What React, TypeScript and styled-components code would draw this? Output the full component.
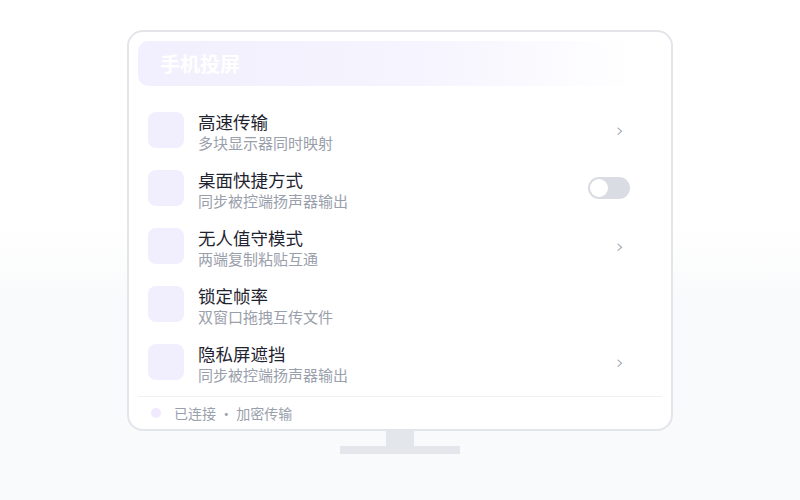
import React from "react";
import styled, { createGlobalStyle } from "styled-components";

const GlobalStyle = createGlobalStyle`
  html, body {
    margin: 0;
    padding: 0;
  }
  body {
    font-family: "Noto Sans CJK SC", "Noto Sans", sans-serif;
    background: linear-gradient(180deg, #ffffff 0%, #ffffff 45%, #f9fafb 60%, #f9fafb 100%);
  }
`;

type Item = {
  title: string;
  desc: string;
  action: "chevron" | "toggle" | "none";
};

const items: Item[] = [
  { title: "高速传输", desc: "多块显示器同时映射", action: "chevron" },
  { title: "桌面快捷方式", desc: "同步被控端扬声器输出", action: "toggle" },
  { title: "无人值守模式", desc: "两端复制粘贴互通", action: "chevron" },
  { title: "锁定帧率", desc: "双窗口拖拽互传文件", action: "none" },
  { title: "隐私屏遮挡", desc: "同步被控端扬声器输出", action: "chevron" },
];

const App = () => {
  return (
    <Page>
      <GlobalStyle />
      <Monitor>
        <Header>手机投屏</Header>
        <List>
          {items.map((item, idx) => (
            <Row key={idx}>
              <IconBox />
              <Texts>
                <Title>{item.title}</Title>
                <Desc>{item.desc}</Desc>
              </Texts>
              {item.action === "chevron" && <Chevron>›</Chevron>}
              {item.action === "toggle" && (
                <Toggle>
                  <Knob />
                </Toggle>
              )}
            </Row>
          ))}
        </List>
        <Footer>
          <Dot />
          <FooterText>已连接 · 加密传输</FooterText>
        </Footer>
      </Monitor>
      <Neck />
      <Base />
    </Page>
  );
};
export default App;

const Page = styled.div`
  width: 800px;
  height: 500px;
  display: flex;
  flex-direction: column;
  align-items: center;
  padding-top: 30px;
  box-sizing: border-box;
`;

const Monitor = styled.div`
  width: 546px;
  height: 401px;
  box-sizing: border-box;
  border: 2px solid #e3e5ea;
  border-radius: 16px;
  background: #ffffff;
  padding: 9px 9px 0 9px;
  display: flex;
  flex-direction: column;
`;

const Header = styled.div`
  height: 45px;
  border-radius: 10px;
  background: linear-gradient(90deg, #f2effe 0%, #f6f4fe 55%, rgba(255, 255, 255, 0) 96%);
  color: #ffffff;
  font-size: 20px;
  font-weight: 700;
  line-height: 45px;
  padding-left: 22px;
  margin-right: 2px;
`;

const List = styled.div`
  display: flex;
  flex-direction: column;
  padding-top: 15px;
  padding-bottom: 5px;
  border-bottom: 1px solid #eef0f3;
`;

const Row = styled.div`
  height: 58px;
  display: flex;
  align-items: center;
  padding: 0 32px 0 10px;
`;

const IconBox = styled.div`
  width: 36px;
  height: 36px;
  border-radius: 8px;
  background: #f1eefe;
  flex-shrink: 0;
`;

const Texts = styled.div`
  flex: 1;
  display: flex;
  flex-direction: column;
  margin-left: 14px;
  padding-top: 3px;
`;

const Title = styled.div`
  font-size: 17.5px;
  line-height: 22px;
  color: #1f2430;
`;

const Desc = styled.div`
  font-size: 15px;
  line-height: 20px;
  color: #9aa0ab;
`;

const Chevron = styled.span`
  font-family: "DejaVu Sans", sans-serif;
  font-size: 20px;
  font-weight: 300;
  color: #8e95a1;
  margin-right: 6px;
`;

const Toggle = styled.div`
  width: 42px;
  height: 22px;
  border-radius: 11px;
  background: #d9dce2;
  display: flex;
  align-items: center;
  padding: 0 2px;
  box-sizing: border-box;
`;

const Knob = styled.div`
  width: 18px;
  height: 18px;
  border-radius: 50%;
  background: #ffffff;
`;

const Footer = styled.div`
  flex: 1;
  display: flex;
  align-items: center;
  padding-left: 13px;
`;

const Dot = styled.div`
  width: 10px;
  height: 10px;
  border-radius: 50%;
  background: #efeafe;
`;

const FooterText = styled.span`
  margin-left: 13px;
  font-size: 14px;
  color: #9aa0ab;
`;

const Neck = styled.div`
  width: 28px;
  height: 15px;
  background: #e3e6ea;
`;

const Base = styled.div`
  width: 120px;
  height: 8px;
  background: #e3e6ea;
`;
